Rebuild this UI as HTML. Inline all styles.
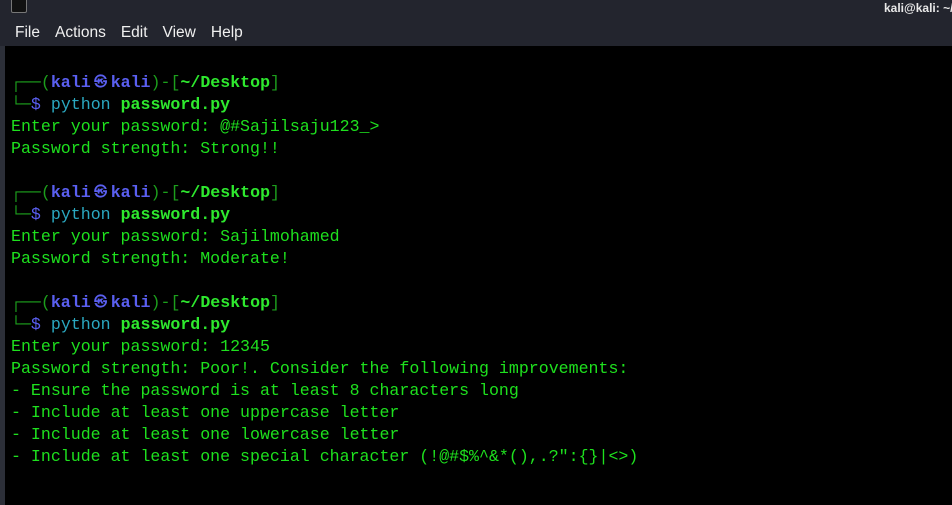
<!DOCTYPE html>
<html><head><meta charset="utf-8"><style>
body{margin:0;width:952px;height:505px;overflow:hidden;background:#000;position:relative;font-family:"Liberation Sans",sans-serif}
#top{position:absolute;left:0;top:0;width:952px;height:46px;background:#23252e}
#left{position:absolute;left:0;top:46px;width:5px;height:459px;background:#2c2f38}
#icon{position:absolute;left:11px;top:0;width:14px;height:12px;border:1px solid #777;border-top:none;background:#111;border-radius:0 0 2px 2px}
#title{position:absolute;left:884px;top:1px;font-size:12px;color:#e8e8e8;font-weight:bold;white-space:nowrap}
#menu{position:absolute;left:15px;top:24px;font-size:15.5px;color:#f0f0f0}
#menu span{margin-right:15px}
#term{position:absolute;left:11px;top:72px;font-family:"Liberation Mono","DejaVu Sans Mono",monospace;font-size:16.6px;line-height:22px;color:#1ee01e;white-space:pre}
#term div{height:22px}
.g{color:#1c9e1c}.b{color:#5a5ff0;font-weight:bold}.bd{color:#2ee82e;font-weight:bold}.t{color:#2aa8c0}.bl{color:#5a5ff0}
.at{display:inline-block;width:20px;height:22px;line-height:22px;vertical-align:top;text-align:center;font-size:13px;color:#5a5ff0;font-weight:bold}
</style></head><body>
<div id="top"><div id="icon"></div><div id="title">kali@kali: ~/</div>
<div id="menu"><span>File</span><span>Actions</span><span>Edit</span><span>View</span><span>Help</span></div></div>
<div id="left"></div>
<div id="term"><div><span class="g">┌──(</span><span class="b">kali</span><span class="at">㉿</span><span class="b">kali</span><span class="g">)-[</span><span class="bd">~/Desktop</span><span class="g">]</span></div><div><span class="g">└─</span><span class="bl">$</span> <span class="t">python</span> <span class="bd">password.py</span></div><div>Enter your password: @#Sajilsaju123_&gt;</div><div>Password strength: Strong!!</div><div></div><div><span class="g">┌──(</span><span class="b">kali</span><span class="at">㉿</span><span class="b">kali</span><span class="g">)-[</span><span class="bd">~/Desktop</span><span class="g">]</span></div><div><span class="g">└─</span><span class="bl">$</span> <span class="t">python</span> <span class="bd">password.py</span></div><div>Enter your password: Sajilmohamed</div><div>Password strength: Moderate!</div><div></div><div><span class="g">┌──(</span><span class="b">kali</span><span class="at">㉿</span><span class="b">kali</span><span class="g">)-[</span><span class="bd">~/Desktop</span><span class="g">]</span></div><div><span class="g">└─</span><span class="bl">$</span> <span class="t">python</span> <span class="bd">password.py</span></div><div>Enter your password: 12345</div><div>Password strength: Poor!. Consider the following improvements:</div><div>- Ensure the password is at least 8 characters long</div><div>- Include at least one uppercase letter</div><div>- Include at least one lowercase letter</div><div>- Include at least one special character (!@#$%^&amp;*(),.?":{}|&lt;&gt;)</div></div>
</body></html>
